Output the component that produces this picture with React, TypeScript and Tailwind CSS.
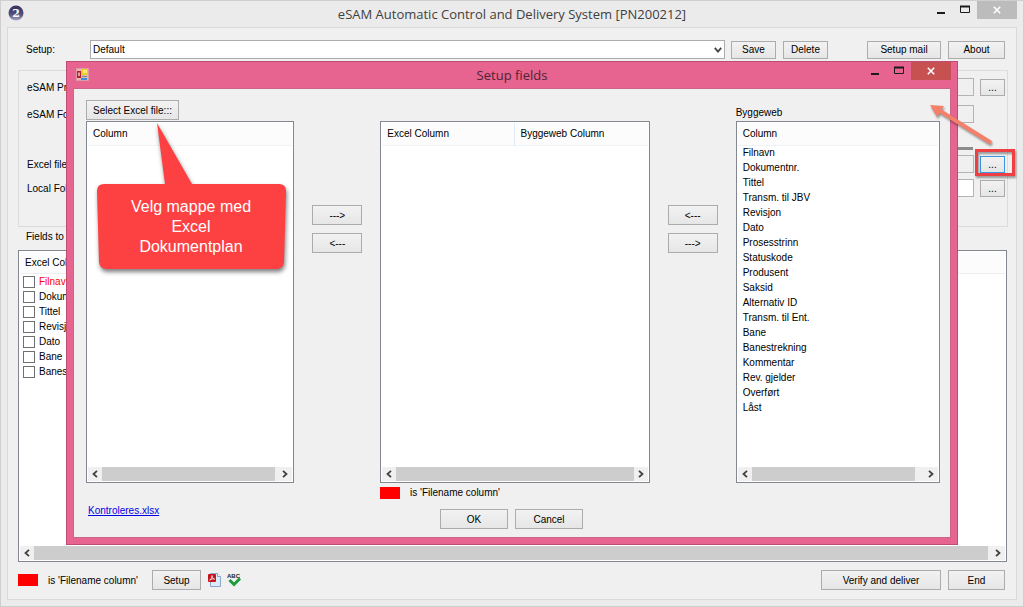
import { ReactNode } from 'react'
import clsx from 'clsx'

const setupColumns = ['Filnavn', 'Dokumentnr.', 'Tittel', 'Revisjon', 'Dato', 'Bane', 'Banestrekning']

const byggewebColumns = [
  'Filnavn',
  'Dokumentnr.',
  'Tittel',
  'Transm. til JBV',
  'Revisjon',
  'Dato',
  'Prosesstrinn',
  'Statuskode',
  'Produsent',
  'Saksid',
  'Alternativ ID',
  'Transm. til Ent.',
  'Bane',
  'Banestrekning',
  'Kommentar',
  'Rev. gjelder',
  'Overført',
  'Låst',
]

interface ButtonProps {
  children: ReactNode
  className?: string
  label?: string
}

function Button({ children, className, label }: ButtonProps) {
  return (
    <button
      type="button"
      aria-label={label}
      className={clsx(
        'shrink-0 border border-[#acacac] bg-linear-to-b from-[#f2f2f2] to-[#e6e6e6] text-center whitespace-nowrap',
        className
      )}
    >
      {children}
    </button>
  )
}

function WindowButtons({ closeClass }: { closeClass: string }) {
  return (
    <div className="flex h-[18px] items-start">
      <button type="button" aria-label="Minimize" className="flex h-[18px] w-6 items-center justify-center">
        <svg width="8" height="12" viewBox="0 0 8 12">
          <rect x="0" y="8" width="8" height="2" fill="#1b1b1b" />
        </svg>
      </button>
      <button type="button" aria-label="Maximize" className="flex h-[18px] w-6 items-center justify-center">
        <svg width="10" height="12" viewBox="0 0 10 12">
          <path d="M0.5 2.5h9v6h-9z" fill="none" stroke="#1b1b1b" />
          <path d="M0 2.5h10" stroke="#1b1b1b" strokeWidth="2" />
        </svg>
      </button>
      <button type="button" aria-label="Close" className={clsx('flex h-[18px] w-10 items-center justify-center', closeClass)}>
        <svg width="8" height="8" viewBox="0 0 8 8">
          <path d="M0.8 0.8l6.4 6.4M7.2 0.8L0.8 7.2" stroke="#fff" strokeWidth="1.6" />
        </svg>
      </button>
    </div>
  )
}

function ScrollBar({ thumbClass }: { thumbClass?: string }) {
  return (
    <div className="flex h-[14px] shrink-0 items-stretch bg-[#f0f0f0]">
      <button type="button" aria-label="Scroll left" className="flex w-[14px] items-center justify-center">
        <svg width="6" height="8" viewBox="0 0 6 8">
          <path d="M5 0.8L1.5 4L5 7.2" fill="none" stroke="#404040" strokeWidth="1.8" />
        </svg>
      </button>
      <div className={clsx('flex-1 bg-[#cdcdcd]', thumbClass)} />
      <button type="button" aria-label="Scroll right" className="flex w-[14px] items-center justify-center">
        <svg width="6" height="8" viewBox="0 0 6 8">
          <path d="M1 0.8L4.5 4L1 7.2" fill="none" stroke="#404040" strokeWidth="1.8" />
        </svg>
      </button>
    </div>
  )
}

interface ListViewProps {
  headers: string[]
  rows?: string[]
  thumbClass?: string
}

function ListView({ headers, rows = [], thumbClass }: ListViewProps) {
  return (
    <div className="flex flex-1 flex-col border border-[#828790] bg-white p-[1px]">
      <div className="flex-1">
        <table className="w-full table-fixed border-collapse text-left">
          <thead>
            <tr className="h-[22px] border-b border-[#eef3f8] bg-[#fcfcfc]">
              {headers.map((header, i) => (
                <th
                  key={header}
                  className={clsx('px-[5px] font-normal', i < headers.length - 1 && 'border-r border-[#dfeaf5]')}
                >
                  {header}
                </th>
              ))}
            </tr>
          </thead>
          <tbody>
            {rows.map((row) => (
              <tr key={row} className="h-[15px]">
                <td className="px-[5px]">{row}</td>
              </tr>
            ))}
          </tbody>
        </table>
      </div>
      <ScrollBar thumbClass={thumbClass} />
    </div>
  )
}

function FilenameLegend() {
  return (
    <div className="flex items-center gap-[10px]">
      <span className="h-3 w-5 bg-[#ff0000]" />
      <span>is 'Filename column'</span>
    </div>
  )
}

function AppLogo() {
  return (
    <svg width="16" height="16" viewBox="0 0 16 16">
      <defs>
        <linearGradient id="ball" x1="0" y1="0" x2="0" y2="1">
          <stop offset="0" stopColor="#34305c" />
          <stop offset="0.6" stopColor="#55517f" />
          <stop offset="1" stopColor="#a9a8c4" />
        </linearGradient>
      </defs>
      <circle cx="8" cy="8" r="7.5" fill="url(#ball)" />
      <text
        x="8"
        y="12"
        textAnchor="middle"
        fontSize="11"
        fontWeight="700"
        fill="#fff"
        fontFamily="DejaVu Serif, serif"
      >
        2
      </text>
    </svg>
  )
}

function FormIcon() {
  return (
    <svg width="13" height="13" viewBox="0 0 13 13">
      <rect x="0.5" y="0.5" width="12" height="12" fill="#dcb9b6" stroke="#d9a9a9" strokeDasharray="1 1" />
      <rect x="1" y="3" width="4" height="7" fill="#b3202c" />
      <rect x="2.3" y="4.5" width="1.4" height="3.5" fill="#f7d6d6" />
      <rect x="6" y="1" width="6" height="6" fill="#f3c928" />
      <rect x="7" y="2" width="4" height="3" fill="#fbe67a" />
      <rect x="5" y="10" width="6" height="2" fill="#3b8ee0" />
      <rect x="6" y="8" width="5" height="1" fill="#8a8a80" />
    </svg>
  )
}

function PdfIcon() {
  return (
    <svg width="13" height="14" viewBox="0 0 13 14">
      <path d="M2.5 0.5h7l3 3v10h-10z" fill="#dcebf7" stroke="#8aa9c8" />
      <path d="M9.5 0.5v3h3" fill="#fff" stroke="#8aa9c8" />
      <rect x="0" y="1" width="8" height="8" rx="1" fill="#c3131d" />
      <path
        d="M1.5 7.2C3 6.5 4 4.5 4 2.5C4.2 4.5 5 5.6 6.6 6C5 5.7 3 6 1.5 7.2z"
        fill="none"
        stroke="#fff"
        strokeWidth="0.8"
      />
    </svg>
  )
}

function SpellCheckIcon() {
  return (
    <svg width="15" height="14" viewBox="0 0 15 14">
      <path d="M2.5 7L7 11.5L13 5.5" fill="none" stroke="#1c9a3c" strokeWidth="3" />
      <text x="6.5" y="5" textAnchor="middle" fontSize="6" fontWeight="700" fill="#222" fontFamily="Liberation Sans, sans-serif">
        ABC
      </text>
    </svg>
  )
}

interface PathRowProps {
  id: string
  label: string
  browse?: boolean
  focused?: boolean
  filled?: boolean
}

function PathRow({ id, label, browse = true, focused, filled }: PathRowProps) {
  return (
    <div className="flex h-[18px] items-center">
      <label htmlFor={id} className="w-20 shrink-0">
        {label}
      </label>
      <input
        id={id}
        type="text"
        className={clsx('h-[18px] min-w-0 flex-1 border border-[#b4b4b4]', filled ? 'bg-white' : 'bg-[#f0f0f0]')}
      />
      <div className="ml-[6px] flex w-[25px]">
        {browse && (
          <Button label={'Browse ' + label} className={clsx('h-[17px] w-[25px]', focused && 'border-[#3c95e0]!')}>
            ...
          </Button>
        )}
      </div>
    </div>
  )
}

function SetupFieldsDialog() {
  return (
    <section
      role="dialog"
      aria-label="Setup fields"
      className="absolute top-[60px] right-[65px] bottom-[61px] left-[65px] flex flex-col border border-[#bf4c77] bg-[#e6648f] px-[6px] pb-[6px]"
    >
      <header className="grid h-[26px] grid-cols-[1fr_auto_1fr] items-start">
        <div className="pt-[6px] pl-[3px]">
          <FormIcon />
        </div>
        <h2 className="pt-[3px] font-['Open_Sans',sans-serif] text-[13px] leading-5 text-[#4f2335]">Setup fields</h2>
        <div className="flex justify-end">
          <WindowButtons closeClass="bg-[#c75050]" />
        </div>
      </header>

      <div className="flex flex-1 flex-col border border-[#c9668a] bg-[#f0f0f0] pt-[11px] pr-[10px] pb-2 pl-3">
        <div className="grid flex-1 grid-cols-[208fr_50px_269fr_50px_204fr] gap-x-[18px]">
          <div className="flex flex-col">
            <div className="h-[21px]">
              <Button className="h-5 w-[93px]">Select Excel file:::</Button>
            </div>
            <ListView headers={['Column']} thumbClass="mr-[3px]" />
          </div>

          <div className="flex flex-col gap-2 pt-[105px]">
            <Button label="Add Excel column" className="h-5">
              ---&gt;
            </Button>
            <Button label="Remove Excel column" className="h-5">
              &lt;---
            </Button>
          </div>

          <div className="flex flex-col pt-[21px]">
            <ListView headers={['Excel Column', 'Byggeweb Column']} />
          </div>

          <div className="flex flex-col gap-2 pt-[105px]">
            <Button label="Add Byggeweb column" className="h-5">
              &lt;---
            </Button>
            <Button label="Remove Byggeweb column" className="h-5">
              ---&gt;
            </Button>
          </div>

          <div className="flex flex-col">
            <h3 className="flex h-[21px] items-end pb-[2px]">Byggeweb</h3>
            <ListView headers={['Column']} rows={byggewebColumns} thumbClass="mr-[9px]" />
          </div>
        </div>

        <div className="grid grid-cols-[278fr_576fr]">
          <div className="pt-[21px] pl-[2px]">
            <a href="#kontroleres" className="text-[#0000e6] underline">
              Kontroleres.xlsx
            </a>
          </div>
          <div className="pt-[3px] pl-4">
            <FilenameLegend />
            <div className="mt-[10px] flex gap-[7px] pl-[60px]">
              <Button className="h-5 w-[68px]">OK</Button>
              <Button className="h-5 w-[68px]">Cancel</Button>
            </div>
          </div>
        </div>
      </div>
    </section>
  )
}

function Callout() {
  return (
    <div className="absolute top-[119px] left-[89px] h-[160px] w-[202px]">
      <svg width="202" height="160" viewBox="0 0 202 160" className="absolute drop-shadow-[1px_3px_2px_rgba(0,0,0,0.5)]">
        <path
          d="M67 3L102 64H189Q196 64 196 71L194 142Q193 149 187 149H16Q10 149 9 142L7 71Q7 64 14 64H75Z"
          fill="#fd4042"
        />
      </svg>
      <p className="relative px-8 pt-[77px] text-center text-[16px] leading-5 text-white">
        Velg mappe med
        <br />
        Excel
        <br />
        Dokumentplan
      </p>
    </div>
  )
}

export default function App() {
  return (
    <div className="relative flex min-h-screen flex-col overflow-hidden border border-[#cfcfcf] bg-[#ebebeb] px-[6px] pb-[6px] font-['Liberation_Sans',Arial,sans-serif] text-[10px] leading-[13px] text-black">
      <header className="grid h-[26px] grid-cols-[1fr_auto_1fr] items-start">
        <div className="pt-1 pl-[1px]">
          <AppLogo />
        </div>
        <h1 className="pt-[3px] font-['Open_Sans',sans-serif] text-[13px] leading-5 text-[#404040]">
          eSAM Automatic Control and Delivery System [PN200212]
        </h1>
        <div className="flex justify-end">
          <WindowButtons closeClass="bg-[#bcbcbc]" />
        </div>
      </header>

      <main className="flex flex-1 flex-col border border-[#dadada] bg-[#f0f0f0] pr-[9px] pl-[10px]">
        <div className="flex items-center pt-3 pr-[2px] pl-2">
          <label htmlFor="setup" className="w-16 shrink-0">
            Setup:
          </label>
          <div className="relative flex-1">
            <select
              id="setup"
              defaultValue="Default"
              className="h-[19px] w-full appearance-none border border-[#acacac] bg-white px-[2px]"
            >
              <option>Default</option>
            </select>
            <svg width="8" height="6" viewBox="0 0 8 6" className="pointer-events-none absolute top-[7px] right-[3px]">
              <path d="M0.8 0.8L4 4.5L7.2 0.8" fill="none" stroke="#444" strokeWidth="1.8" />
            </svg>
          </div>
          <Button className="ml-[6px] h-[18px] w-[45px]">Save</Button>
          <Button className="ml-[7px] h-[18px] w-[45px]">Delete</Button>
          <Button className="ml-[39px] h-[18px] w-[74px]">Setup mail</Button>
          <Button className="ml-[7px] h-[18px] w-[57px]">About</Button>
        </div>

        <div className="-mr-[1px] mt-[11px] flex flex-col border border-[#dcdcdc] pt-[7px] pr-[2px] pb-[29px] pl-2">
          <PathRow id="project" label="eSAM Project:" />
          <div className="mt-[9px]">
            <PathRow id="folder" label="eSAM Folder:" browse={false} />
          </div>
          <div className="mt-6 mr-8 ml-20 h-[3px] bg-[#8c8c8c]" />
          <div className="mt-[5px]">
            <PathRow id="excel" label="Excel file:" focused />
          </div>
          <div className="mt-[6px]">
            <PathRow id="local" label="Local Folder:" filled />
          </div>
        </div>

        <h2 className="mt-[3px] mb-[7px] pl-2">Fields to process:</h2>

        <div className="flex flex-1 flex-col border border-[#828790] bg-white p-[1px]">
          <div className="flex-1">
            <div className="flex h-[22px] items-center border-b border-[#eeeeee] bg-[#fcfcfc] pl-[5px]">Excel Column</div>
            <ul>
              {setupColumns.map((column, i) => (
                <li key={column} className="flex h-[15px] items-center pl-[3px]">
                  <label className={clsx('flex items-center gap-1', i === 0 && 'text-[#ff0000]')}>
                    <input type="checkbox" className="h-3 w-3 appearance-none border border-[#707070] bg-white" />
                    {column}
                  </label>
                </li>
              ))}
            </ul>
          </div>
          <ScrollBar thumbClass="mr-[3px]" />
        </div>

        <footer className="flex items-center pt-2 pr-[2px] pb-[9px]">
          <FilenameLegend />
          <Button className="ml-[14px] h-5 w-[49px]">Setup</Button>
          <div className="ml-[7px] flex gap-[6px]">
            <PdfIcon />
            <SpellCheckIcon />
          </div>
          <Button className="ml-auto h-5 w-[120px]">Verify and deliver</Button>
          <Button className="ml-[7px] h-5 w-[57px]">End</Button>
        </footer>
      </main>

      <SetupFieldsDialog />
      <Callout />

      {/* highlight round the Excel browse button, with an arrow to the dialog */}
      <div className="pointer-events-none absolute top-[148px] right-2 h-[27px] w-10 border-3 border-[#ee3f45] drop-shadow-[1px_2px_1px_rgba(0,0,0,0.4)]" />
      <svg
        width="70"
        height="48"
        viewBox="0 0 70 48"
        className="pointer-events-none absolute top-[99px] right-[27px] drop-shadow-[1px_2px_1px_rgba(0,0,0,0.4)]"
      >
        <path d="M4 5L18 6L15.500 9.500L66 41L64 44.500L13.500 13L11 17Z" fill="#f4806a" />
      </svg>
    </div>
  )
}
